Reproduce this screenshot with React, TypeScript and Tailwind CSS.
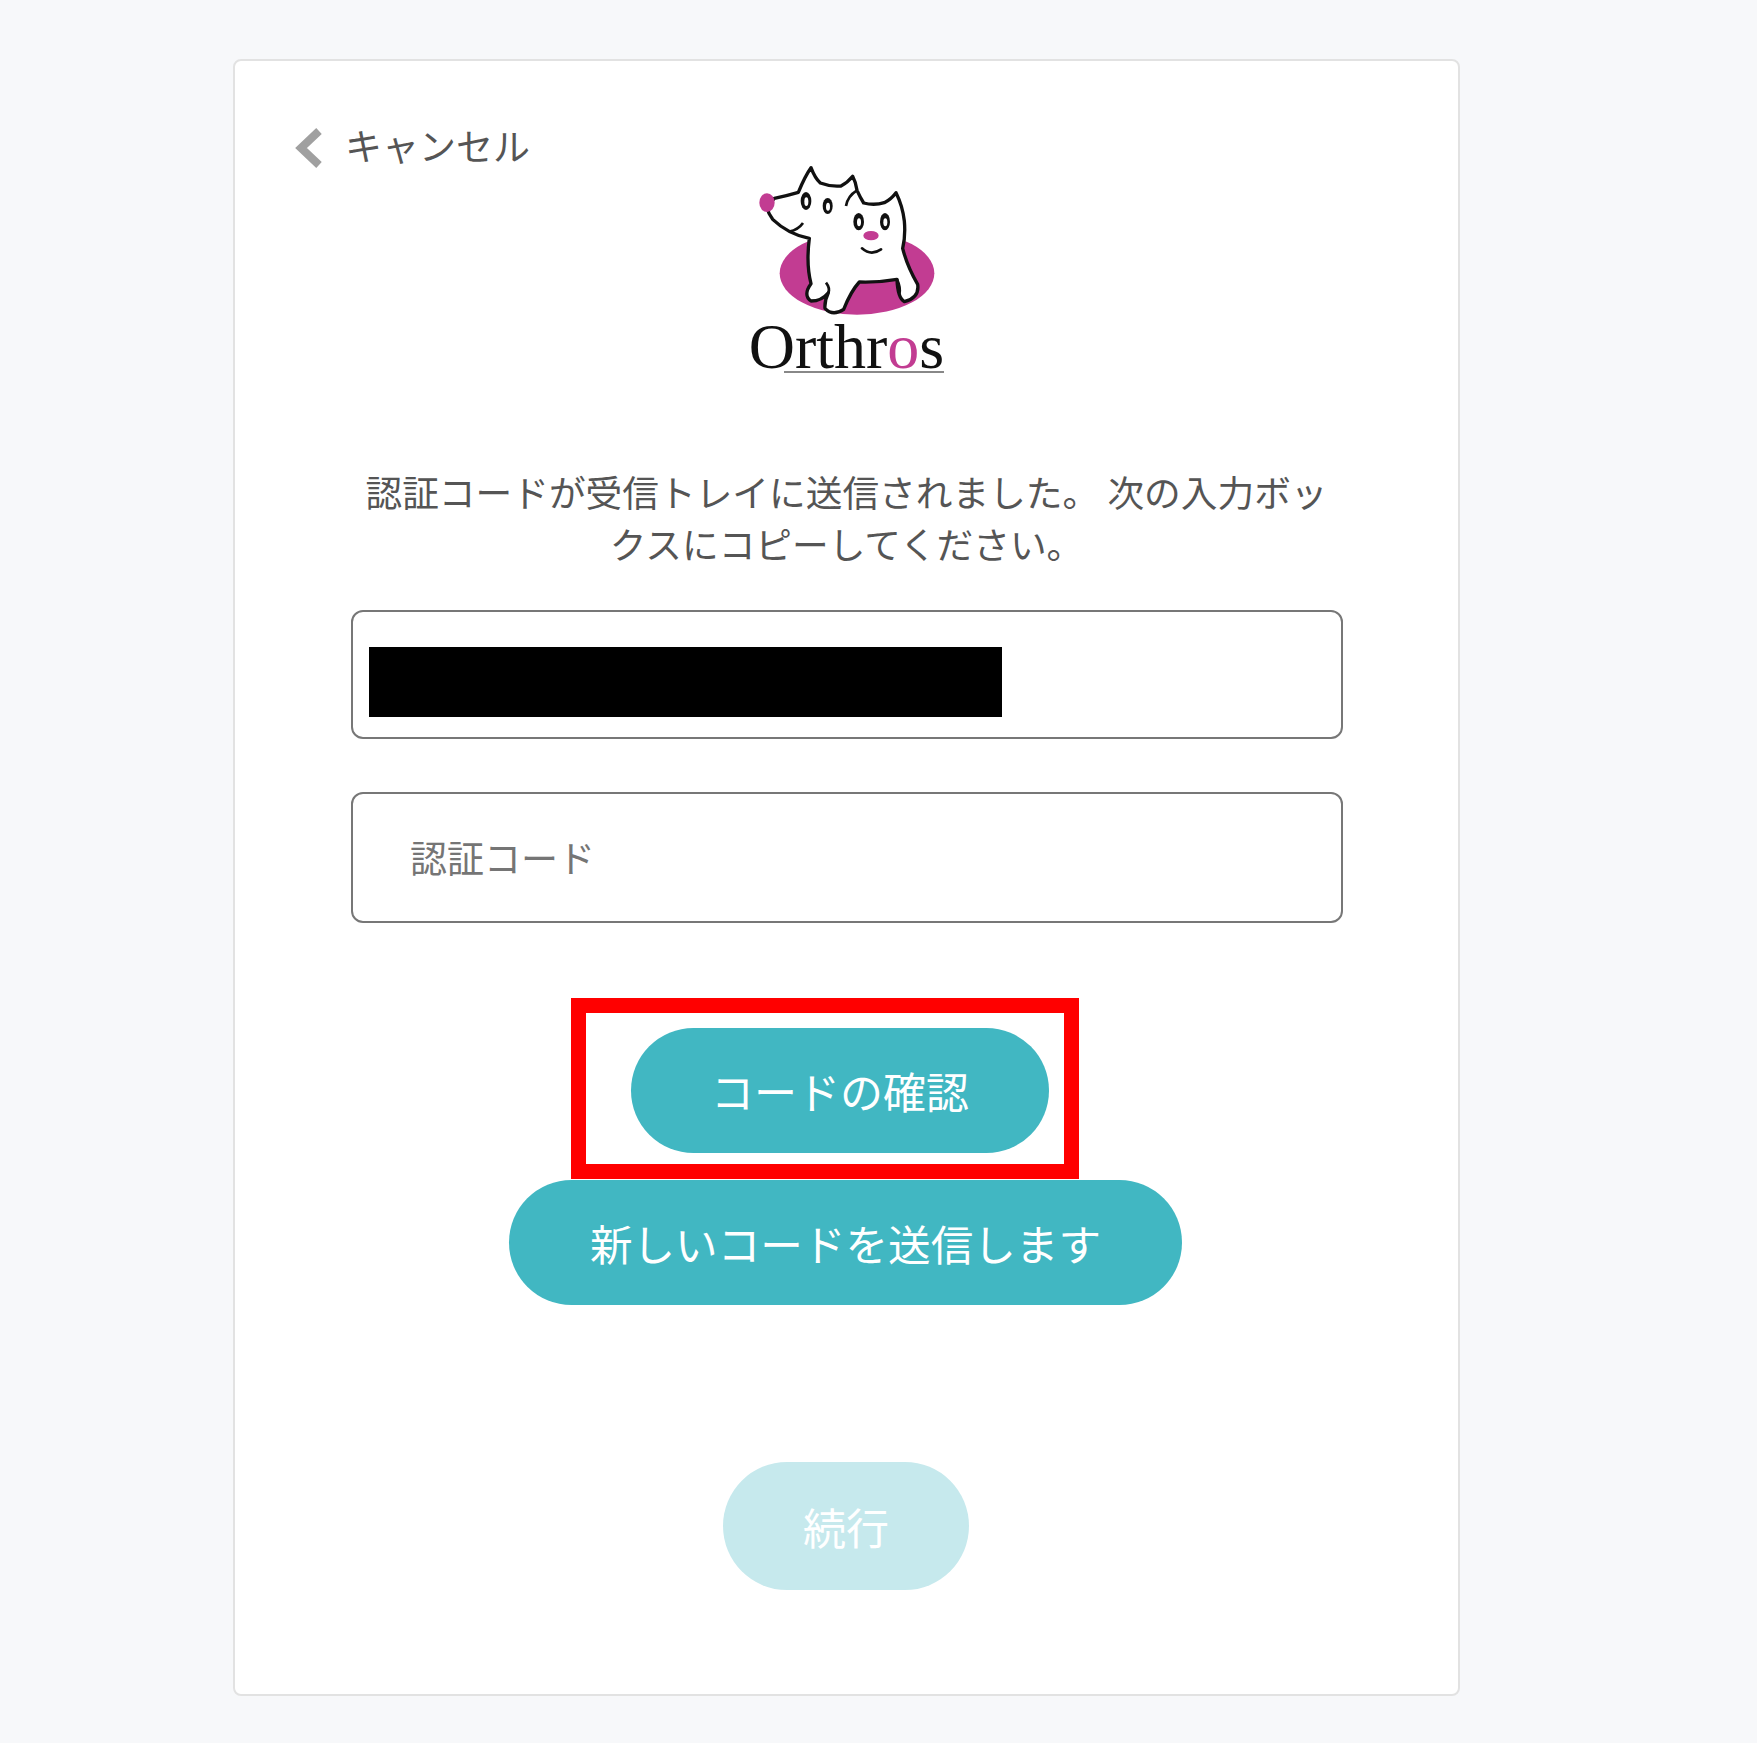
const jp = "font-['Noto_Sans_CJK_JP','Noto_Sans',sans-serif]";

const Logo = () => (
  <div className="flex flex-col items-center">
    <svg width="220" height="170" viewBox="0 0 660 510" className="-mt-[14px] -ml-[12px]">
      <ellipse cx="378" cy="367" rx="232" ry="124" fill="#c23c92" />
      <path
        d="M130 142 Q165 135 202 124 Q222 75 240 50 Q252 82 268 96 Q300 108 330 105 Q350 95 365 76 Q375 95 378 118 Q388 140 398 156 Q430 164 460 155 Q480 145 495 125 Q515 165 520 210 Q524 255 515 292 Q528 345 560 400 Q566 440 520 452 Q500 440 498 385 Q440 395 385 393 Q360 420 338 475 Q305 497 282 472 Q280 450 292 425 Q272 450 240 450 Q215 432 240 398 Q225 340 235 262 Q172 250 125 205 Q112 188 108 170 Z"
        fill="#fff"
        stroke="#111"
        strokeWidth="10"
        strokeLinejoin="round"
      />
      <path d="M175 242 Q202 236 216 216" fill="none" stroke="#111" strokeWidth="8" />
      <path d="M345 165 Q350 135 378 118" fill="none" stroke="#111" strokeWidth="8" />
      <path d="M292 425 Q298 412 285 395" fill="none" stroke="#111" strokeWidth="8" />
      <path d="M498 385 Q510 410 505 430" fill="none" stroke="#111" strokeWidth="8" />
      <ellipse cx="108" cy="155" rx="23" ry="28" fill="#c23c92" />
      <ellipse cx="225" cy="150" rx="16" ry="27" fill="#111" />
      <ellipse cx="226" cy="152" rx="6" ry="13" fill="#fff" />
      <ellipse cx="290" cy="165" rx="15" ry="24" fill="#111" />
      <ellipse cx="291" cy="167" rx="6" ry="12" fill="#fff" />
      <ellipse cx="383" cy="212" rx="16" ry="26" fill="#111" />
      <ellipse cx="384" cy="214" rx="6" ry="12" fill="#fff" />
      <ellipse cx="462" cy="212" rx="15" ry="26" fill="#111" />
      <ellipse cx="463" cy="214" rx="6" ry="12" fill="#fff" />
      <ellipse cx="420" cy="254" rx="23" ry="14" fill="#c23c92" />
      <path d="M393 292 Q420 316 450 295" fill="none" stroke="#111" strokeWidth="8" strokeLinecap="round" />
    </svg>
    <div className="-mt-[5px] h-[55px] font-['Liberation_Serif',serif] text-[64px] leading-[62px] text-[#111]">
      Orthr<span className="text-[#c23c92]">o</span>s
    </div>
    <div className="ml-[34px] h-[2px] w-[160px] bg-[#888]" />
  </div>
);

export default function App() {
  return (
    <div className={`min-h-[1743px] bg-[#f7f8fa] pl-[233px] pt-[59px] ${jp}`}>
      <div className="relative flex h-[1637px] w-[1227px] flex-col rounded-[8px] border-2 border-[#e2e2e2] bg-white">
        {/* cancel link */}
        <div className="ml-[60px] mt-[64px] flex h-[40px] items-center gap-[22px] text-[37px] text-[#555]">
          <svg width="28" height="40" viewBox="0 0 28 40" className="mt-[6px]">
            <path d="M24 3 L6 20 L24 37" fill="none" stroke="#a0a0a0" strokeWidth="8" />
          </svg>
          <span className="leading-[40px]">キャンセル</span>
        </div>

        <Logo />

        <p className="mx-auto mt-[92px] w-[980px] text-center text-[36.7px] leading-[52px] text-[#555]">
          認証コードが受信トレイに送信されました。 次の入力ボックスにコピーしてください。
        </p>

        <div className="relative ml-[116px] mt-[41px] h-[129px] w-[992px] rounded-[12px] border-2 border-[#777] bg-white">
          {/* masked value */}
          <div className="absolute left-[16px] top-[35px] h-[70px] w-[633px] bg-black" />
        </div>

        <div className="ml-[116px] mt-[53px] flex h-[131px] w-[992px] items-center rounded-[12px] border-2 border-[#777] bg-white pl-[57px] text-[37px] text-[#757575]">
          認証コード
        </div>

        <div className="relative ml-[396px] mt-[105px] flex h-[125px] w-[418px] items-center justify-center rounded-full bg-[#41b7c2] text-[43px] text-white">
          コードの確認
          {/* red annotation box */}
          <div className="pointer-events-none absolute bottom-[-26px] left-[-60px] right-[-30px] top-[-30px] border-[15px] border-[#ff0000]" />
        </div>

        <div className="ml-[274px] mt-[27px] flex h-[125px] w-[673px] items-center justify-center rounded-full bg-[#41b7c2] text-[42.6px] text-white">
          新しいコードを送信します
        </div>

        <div className="ml-[488px] mt-[157px] flex h-[128px] w-[246px] items-center justify-center rounded-full bg-[#c6e9ed] text-[43px] text-white">
          続行
        </div>
      </div>
    </div>
  );
}
